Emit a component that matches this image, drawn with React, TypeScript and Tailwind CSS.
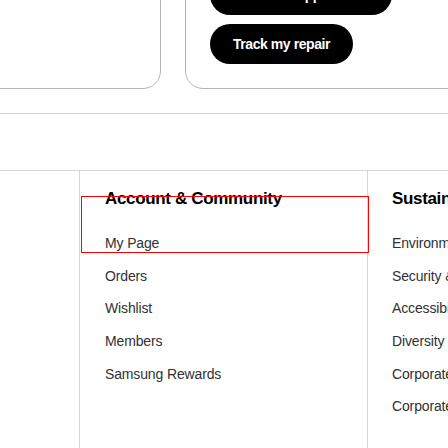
const accountLinks = ["My Page", "Orders", "Wishlist", "Members", "Samsung Rewards"];

const sustainLinks = [
  "Environment",
  "Security & Privacy",
  "Accessibility",
  "Diversity & Inclusion",
  "Corporate Citizenship",
  "Corporate Sustainability",
];

function FooterColumn({ title, links }: { title: string; links: string[] }) {
  return (
    <div className="flex flex-col">
      <h3 className="text-[17px] leading-[24px] font-bold tracking-[-0.02em] text-black whitespace-nowrap">
        {title}
      </h3>
      <ul className="mt-[22px] flex flex-col gap-[12.7px]">
        {links.map((l) => (
          <li
            key={l}
            className="text-[14px] leading-[20px] tracking-[-0.01em] text-[#313131] whitespace-nowrap"
          >
            {l}
          </li>
        ))}
      </ul>
    </div>
  );
}

export default function App() {
  return (
    <div
      className="relative w-[448px] h-[448px] overflow-hidden bg-white"
      style={{ fontFamily: '"Liberation Sans", Arial, sans-serif' }}
    >
      {/* support cards */}
      <div className="flex gap-[24px] -mt-[50px] -ml-[40px]">
        <div className="w-[201px] h-[139px] shrink-0 border border-[#b5b5b5] rounded-[18px]" />
        <div className="w-[320px] shrink-0 border border-[#b5b5b5] rounded-[18px] px-6 pt-6 pb-6 flex flex-col items-start gap-[9px]">
          <button className="h-[40px] w-[182px] rounded-full bg-black text-white text-[14px] font-bold tracking-[-0.03em]">
            Get support
          </button>
          <button className="h-[40px] w-[143px] rounded-full bg-black text-white text-[14px] font-bold tracking-[-0.03em]">
            Track my repair
          </button>
        </div>
      </div>

      <div className="mt-[24px] border-t border-[#d6d6d6] h-[57px]" />

      <div className="flex border-t border-[#d6d6d6] h-[300px]">
        <div className="w-[80px] shrink-0 border-r border-[#d6d6d6]" />
        <div className="w-[288px] shrink-0 border-r border-[#d6d6d6] pl-[25px] pt-[16px]">
          <FooterColumn title="Account & Community" links={accountLinks} />
        </div>
        <div className="pl-[24px] pt-[16px]">
          <FooterColumn title="Sustainability" links={sustainLinks} />
        </div>
      </div>

      {/* focus highlight */}
      <div className="absolute left-[81px] top-[196px] w-[288px] h-[57px] border border-[#ff0000] pointer-events-none" />
    </div>
  );
}
